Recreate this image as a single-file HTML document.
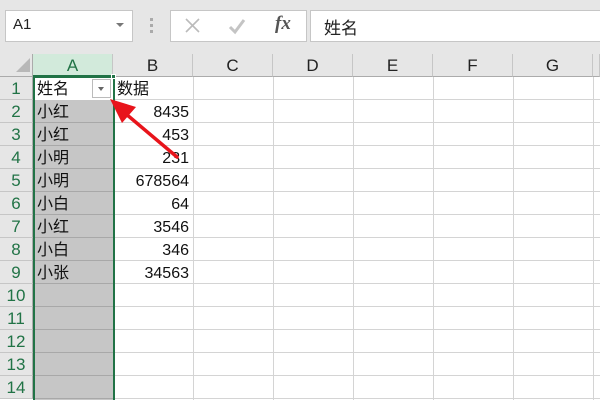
<!DOCTYPE html>
<html style="width:600px;height:400px;overflow:hidden"><head><meta charset="utf-8"><style>
*{margin:0;padding:0;box-sizing:border-box}
body{width:600px;height:400px;overflow:hidden;background:#fff;position:relative;font-family:"Liberation Sans","Noto Sans CJK SC",sans-serif}
.a{position:absolute}
.tb{left:0;top:0;width:600px;height:54px;background:#e6e6e6}
.box{background:#fff;border:1px solid #c6c6c6}
.ch{top:54px;height:23px;background:#e6e6e6;border-right:1px solid #c6c6c6;border-bottom:1px solid #ababab;text-align:center;font-size:17px;line-height:24px;color:#222}
.rh{left:0;width:33px;height:23px;background:#e6e6e6;border-bottom:1px solid #c6c6c6;border-right:1px solid #ababab;text-align:center;font-size:17px;line-height:23px;color:#217346}
.hl{left:33px;width:567px;height:1px;background:#d4d4d4}
.vl{top:77px;width:1px;height:323px;background:#d4d4d4}
.t{font-size:16px;line-height:23px;color:#111}
.n{text-align:right;width:76px;left:113px}
</style></head><body>
<div class="a tb"></div>
<div class="a box" style="left:5px;top:10px;width:128px;height:32px"></div>
<div class="a" style="left:13px;top:16px;font-size:15px;color:#222">A1</div>
<div class="a" style="left:116px;top:23px;width:0;height:0;border-left:4px solid transparent;border-right:4px solid transparent;border-top:4px solid #777"></div>
<div class="a" style="left:150px;top:18px;width:3px;height:3px;background:#aaa;box-shadow:0 6px #aaa,0 12px #aaa"></div>
<div class="a box" style="left:170px;top:10px;width:137px;height:32px"></div>
<svg class="a" style="left:170px;top:10px" width="137" height="32">
<path d="M16 9 L29 22 M29 9 L16 22" stroke="#bbb" stroke-width="1.6"/>
<path d="M60 17 L65 22 L74 10" stroke="#c4c4c4" stroke-width="3" fill="none"/>
</svg>
<div class="a" style="left:275px;top:13px;font-size:19px;color:#555;font-style:italic;font-family:'Liberation Serif',serif;font-weight:bold">fx</div>
<div class="a box" style="left:310px;top:10px;width:295px;height:32px"></div>
<div class="a" style="left:324px;top:14px;font-size:17px;color:#222">姓名</div>

<div class="a" style="left:0;top:54px;width:33px;height:23px;background:#e6e6e6;border-right:1px solid #ababab;border-bottom:1px solid #ababab"></div>
<div class="a" style="left:16px;top:58px;width:0;height:0;border-left:14px solid transparent;border-bottom:14px solid #b8b8b8"></div>
<div class="a ch" style="left:33px;width:80px;background:#d2eadb;color:#217346;border-bottom:2px solid #217346">A</div>
<div class="a ch" style="left:113px;width:80px">B</div>
<div class="a ch" style="left:193px;width:80px">C</div>
<div class="a ch" style="left:273px;width:80px">D</div>
<div class="a ch" style="left:353px;width:80px">E</div>
<div class="a ch" style="left:433px;width:80px">F</div>
<div class="a ch" style="left:513px;width:80px">G</div>
<div class="a ch" style="left:593px;width:7px"></div>

<div class="a hl" style="top:99px"></div><div class="a hl" style="top:122px"></div><div class="a hl" style="top:145px"></div><div class="a hl" style="top:168px"></div><div class="a hl" style="top:191px"></div><div class="a hl" style="top:214px"></div><div class="a hl" style="top:237px"></div><div class="a hl" style="top:260px"></div><div class="a hl" style="top:283px"></div><div class="a hl" style="top:306px"></div><div class="a hl" style="top:329px"></div><div class="a hl" style="top:352px"></div><div class="a hl" style="top:375px"></div><div class="a hl" style="top:398px"></div>
<div class="a" style="left:33px;top:100px;width:80px;height:300px;background:repeating-linear-gradient(#c6c6c6 0 22px,#a8a8a8 22px 23px)"></div>
<div class="a vl" style="left:193px"></div><div class="a vl" style="left:273px"></div><div class="a vl" style="left:353px"></div><div class="a vl" style="left:433px"></div><div class="a vl" style="left:513px"></div><div class="a vl" style="left:593px"></div>

<div class="a rh" style="top:77px">1</div><div class="a rh" style="top:100px">2</div><div class="a rh" style="top:123px">3</div><div class="a rh" style="top:146px">4</div><div class="a rh" style="top:169px">5</div><div class="a rh" style="top:192px">6</div><div class="a rh" style="top:215px">7</div><div class="a rh" style="top:238px">8</div><div class="a rh" style="top:261px">9</div><div class="a rh" style="top:284px">10</div><div class="a rh" style="top:307px">11</div><div class="a rh" style="top:330px">12</div><div class="a rh" style="top:353px">13</div><div class="a rh" style="top:376px">14</div>

<div class="a" style="left:33px;top:77px;width:80px;height:23px;background:#fff"></div>
<div class="a" style="left:33px;top:76px;width:82px;height:327px;border:2px solid #217346"></div>
<div class="a" style="left:111px;top:74px;width:5px;height:5px;background:#217346;border:1px solid #fff"></div>
<div class="a" style="left:92px;top:79px;width:19px;height:19px;background:#fff;border:1px solid #bbb"></div>
<div class="a" style="left:98px;top:87px;width:0;height:0;border-left:3.5px solid transparent;border-right:3.5px solid transparent;border-top:4px solid #666"></div>

<div class="a t" style="left:37px;top:78px">姓名</div>
<div class="a t" style="left:117px;top:78px">数据</div>
<div class="a t" style="left:37px;top:101px">小红</div><div class="a t n" style="top:101px">8435</div>
<div class="a t" style="left:37px;top:124px">小红</div><div class="a t n" style="top:124px">453</div>
<div class="a t" style="left:37px;top:147px">小明</div><div class="a t n" style="top:147px">231</div>
<div class="a t" style="left:37px;top:170px">小明</div><div class="a t n" style="top:170px">678564</div>
<div class="a t" style="left:37px;top:193px">小白</div><div class="a t n" style="top:193px">64</div>
<div class="a t" style="left:37px;top:216px">小红</div><div class="a t n" style="top:216px">3546</div>
<div class="a t" style="left:37px;top:239px">小白</div><div class="a t n" style="top:239px">346</div>
<div class="a t" style="left:37px;top:262px">小张</div><div class="a t n" style="top:262px">34563</div>

<svg class="a" style="left:0;top:0" width="600" height="400">
<line x1="177" y1="157" x2="126" y2="114" stroke="#e8141b" stroke-width="3.5" stroke-linecap="round"/>
<polygon points="110,99 136,107 122,123" fill="#e8141b"/>
</svg>
</body></html>
